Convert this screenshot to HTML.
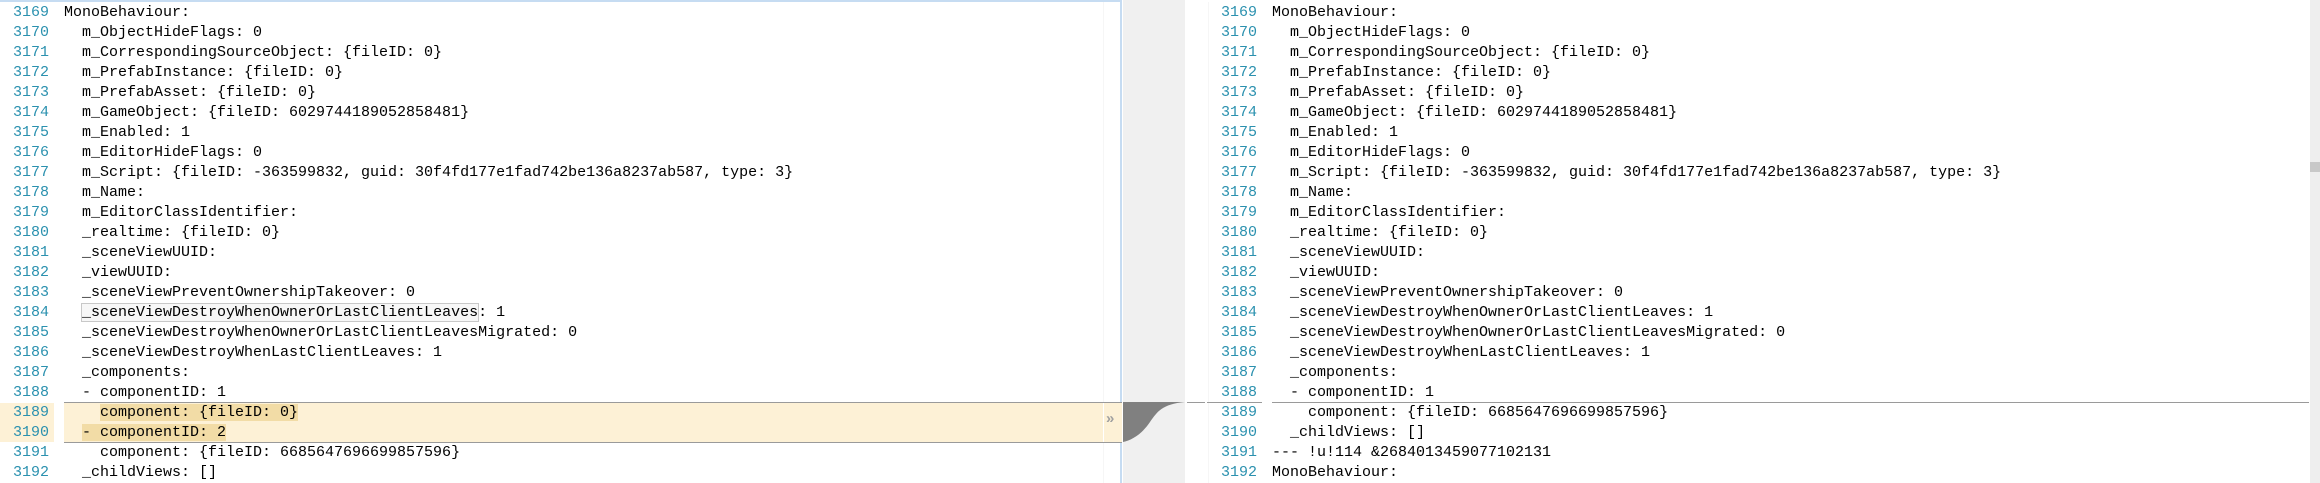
<!DOCTYPE html>
<html><head><meta charset="utf-8"><style>
html,body{margin:0;padding:0;}
body{width:2320px;height:483px;position:relative;overflow:hidden;background:#fff;font-family:"Liberation Mono","DejaVu Sans Mono",monospace;font-size:15px;color:#000;}
.r{position:absolute;height:20px;line-height:20px;white-space:pre;}
.n{color:#2b91af;text-align:right;width:40px;}
.dk{background:#f2dca6;}
.box{outline:1px solid #c8c8c8;background:#f7f7f7;}
</style></head><body>
<div style="position:absolute;left:0;top:0;width:1122px;height:483px;border-top:2px solid #c6dcf2;border-right:2px solid #c6dcf2;box-sizing:border-box;"></div>
<div style="position:absolute;left:1123px;top:0;width:62px;height:483px;background:#f0f0f0;"></div>
<div style="position:absolute;left:1103px;top:2px;width:1px;height:481px;background:#f6f6f6;"></div>
<div style="position:absolute;left:1208px;top:2px;width:1px;height:481px;background:#f6f6f6;"></div>
<div style="position:absolute;left:2310px;top:0;width:10px;height:483px;background:#eeeeee;"></div>
<div style="position:absolute;left:2310px;top:162px;width:10px;height:10px;background:#c8c8c8;"></div>
<div style="position:absolute;left:0;top:403px;width:54px;height:39px;background:#fdf1d6;"></div>
<div style="position:absolute;left:64px;top:402px;width:1058px;height:39px;background:#fdf1d6;border-top:1px solid #9a9a9a;border-bottom:1px solid #9a9a9a;"></div>
<div style="position:absolute;left:1103px;top:403px;width:1px;height:39px;background:#fff;"></div>
<div style="position:absolute;left:1106px;top:409px;font-size:15px;color:#a0a0a0;font-family:'Liberation Sans',sans-serif;font-weight:bold;line-height:20px;">»</div>
<svg style="position:absolute;left:1122px;top:400px" width="65" height="45"><path d="M1 2 L63 2 C40 4 35 12 28 22 C20 34 10 40 1 42 Z" fill="#808080"/></svg>
<div style="position:absolute;left:1187px;top:402px;width:18px;height:1px;background:#9a9a9a;"></div>
<div style="position:absolute;left:1207px;top:402px;width:55px;height:1px;background:#9a9a9a;"></div>
<div style="position:absolute;left:1272px;top:402px;width:1037px;height:1px;background:#9a9a9a;"></div>

<div id="L"></div>
<script>
var L=["MonoBehaviour:","  m_ObjectHideFlags: 0","  m_CorrespondingSourceObject: {fileID: 0}","  m_PrefabInstance: {fileID: 0}","  m_PrefabAsset: {fileID: 0}","  m_GameObject: {fileID: 6029744189052858481}","  m_Enabled: 1","  m_EditorHideFlags: 0","  m_Script: {fileID: -363599832, guid: 30f4fd177e1fad742be136a8237ab587, type: 3}","  m_Name: ","  m_EditorClassIdentifier: ","  _realtime: {fileID: 0}","  _sceneViewUUID: ","  _viewUUID: ","  _sceneViewPreventOwnershipTakeover: 0","  <span class=box>_sceneViewDestroyWhenOwnerOrLastClientLeaves</span>: 1","  _sceneViewDestroyWhenOwnerOrLastClientLeavesMigrated: 0","  _sceneViewDestroyWhenLastClientLeaves: 1","  _components:","  - componentID: 1","    <span class=dk>component: {fileID: 0}</span>","  <span class=dk>- componentID: 2</span>","    component: {fileID: 6685647696699857596}","  _childViews: []"];
var R=L.slice(0,20);R[15]="  _sceneViewDestroyWhenOwnerOrLastClientLeaves: 1";
R=R.concat(["    component: {fileID: 6685647696699857596}","  _childViews: []","--- !u!114 &2684013459077102131","MonoBehaviour:"]);
var h="";
for(var i=0;i<24;i++){var t=3+20*i;
h+='<div class="r n" style="left:9px;top:'+t+'px">'+(3169+i)+'</div>';
h+='<div class="r" style="left:64px;top:'+t+'px">'+L[i]+'</div>';
h+='<div class="r n" style="left:1217px;top:'+t+'px">'+(3169+i)+'</div>';
h+='<div class="r" style="left:1272px;top:'+t+'px">'+R[i]+'</div>';}
document.getElementById("L").innerHTML=h;
</script>
</body></html>
